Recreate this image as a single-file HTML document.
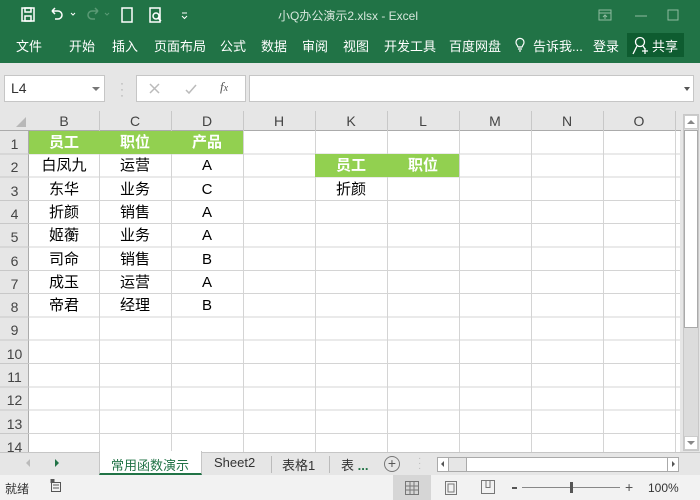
<!DOCTYPE html>
<html><head><meta charset="utf-8">
<style>
*{margin:0;padding:0;box-sizing:border-box}
body{width:700px;height:500px;overflow:hidden;position:relative;background:#e6e6e6;font-family:"Liberation Sans","Noto Sans CJK SC",sans-serif;}
.a{position:absolute}
.title{left:0;top:0;width:700px;height:63px;background:#217346;color:#fff}
.tab{position:absolute;top:36px;font-size:13px;color:#fff}
.cell{position:absolute;width:72px;height:23.3px;line-height:23.3px;text-align:center;font-size:15px;color:#000}
.g{background:#92d050;color:#fff;font-weight:bold}
.ch{position:absolute;top:113px;width:72px;text-align:center;font-size:14px;color:#444}
.rh{position:absolute;left:0;width:29px;text-align:center;font-size:14px;color:#444;height:23.3px;line-height:27px}
.st{position:absolute;top:455px;font-size:13px;color:#333;white-space:nowrap}
</style></head><body>
<div class="a title">
 <svg class="a" style="left:18px;top:5px" width="180" height="20" viewBox="0 0 180 20" fill="none" stroke="#fff" stroke-width="1.5">
  <rect x="4" y="3" width="12" height="13"/><rect x="7" y="3" width="6" height="4"/><rect x="7" y="11" width="6" height="5"/>
  <path d="M34 6 h6 a4 4 0 0 1 0 8 h-3 M34 6 l3 -3 M34 6 l3 3"/>
  <path d="M53 8 l2 2 l2 -2" stroke-width="1"/>
  <path d="M80 6 h-6 a4 4 0 0 0 0 8 h3 M80 6 l-3 -3 M80 6 l-3 3" stroke="#5a9a75"/>
  <path d="M87 8 l2 2 l2 -2" stroke="#5a9a75" stroke-width="1"/>
  <rect x="104" y="3" width="10" height="14"/>
  <rect x="132" y="3" width="10" height="14"/><circle cx="138" cy="11" r="3"/><path d="M140 13 l3 3"/>
  <path d="M164 8 h5 M164 11 l2.5 2.5 l2.5 -2.5" stroke-width="1"/>
 </svg>
 <div class="a" style="left:278px;top:7px;font-size:12px;color:#d6e6dc">小Q办公演示2.xlsx - Excel</div>
 <svg class="a" style="left:560px;top:5px" width="140" height="20" fill="none" stroke="#8fbba0" stroke-width="1">
  <rect x="39" y="5" width="12" height="10"/><path d="M39 8 h12 M45 14 v-4 M43 12 l2 -2 l2 2"/>
  <path d="M75 11 h12"/><rect x="108" y="5" width="10" height="10"/><path d="M145 5 l10 10 M155 5 l-10 10"/>
 </svg>
 <div class="tab" style="left:16px">文件</div>
 <div class="tab" style="left:69px">开始</div>
 <div class="tab" style="left:112px">插入</div>
 <div class="tab" style="left:154px">页面布局</div>
 <div class="tab" style="left:220px">公式</div>
 <div class="tab" style="left:261px">数据</div>
 <div class="tab" style="left:302px">审阅</div>
 <div class="tab" style="left:343px">视图</div>
 <div class="tab" style="left:384px">开发工具</div>
 <div class="tab" style="left:449px">百度网盘</div>
 <svg class="a" style="left:514px;top:36px" width="12" height="17" fill="none" stroke="#fff" stroke-width="1.2"><path d="M3 9 a4 4 0 1 1 6 0 l-1 2 h-4 z M4 13 h4 M5 15 h2"/></svg>
 <div class="tab" style="left:533px">告诉我...</div>
 <div class="tab" style="left:593px">登录</div>
 <div class="a" style="left:627px;top:33px;width:57px;height:24px;background:#0e5c30"></div>
 <svg class="a" style="left:632px;top:36px" width="18" height="19" fill="none" stroke="#fff" stroke-width="1.3"><circle cx="8" cy="6" r="4.5"/><path d="M1 18 l4 -8 M11 10 l2 3 M13 12 v6 M10 15 h6"/></svg>
 <div class="tab" style="left:652px">共享</div>
</div>
<!-- formula bar -->
<div class="a" style="left:4px;top:75px;width:101px;height:27px;background:#fff;border:1px solid #c6c6c6"></div>
<div class="a" style="left:11px;top:80px;font-size:14px;color:#333">L4</div>
<div class="a" style="left:92px;top:87px;border-left:4px solid transparent;border-right:4px solid transparent;border-top:4px solid #777"></div>
<div class="a" style="left:120px;top:80px;color:#aaa;font-size:12px;line-height:6px">·<br>·<br>·</div>
<div class="a" style="left:136px;top:75px;width:110px;height:27px;background:#fff;border:1px solid #c6c6c6"></div>
<svg class="a" style="left:145px;top:80px" width="95" height="18" fill="none" stroke-width="1.5"><path d="M5 4 l9 9 M14 4 l-9 9" stroke="#bbb"/><path d="M41 10 l3 3 l7 -8" stroke="#bbb"/></svg>
<div class="a" style="left:220px;top:79px;font-family:'Liberation Serif',serif;font-style:italic;font-size:13px;color:#555">f<span style="font-size:10px">x</span></div>
<div class="a" style="left:249px;top:75px;width:445px;height:27px;background:#fff;border:1px solid #c6c6c6"></div>
<div class="a" style="left:684px;top:87px;border-left:3px solid transparent;border-right:3px solid transparent;border-top:4px solid #555"></div>
<!-- grid -->
<div class="a" style="left:29px;top:131px;width:651px;height:321px;background-color:#fff;
background-image:repeating-linear-gradient(to bottom,transparent 0,transparent 22.3px,#d4d4d4 22.3px,#d4d4d4 23.3px),repeating-linear-gradient(to right,transparent 0,transparent 70px,#d4d4d4 70px,#d4d4d4 71px,transparent 71px,transparent 72px);
"></div>
<!-- headers -->
<div class="a" style="left:0;top:111px;width:681px;height:20px;background:#e6e6e6;border-bottom:1px solid #ababab"></div>
<div class="a" style="left:0;top:131px;width:29px;height:321px;background:#e6e6e6;border-right:1px solid #ababab"></div>
<div class="a" style="left:0;top:111px;width:681px;height:20px;background-image:repeating-linear-gradient(to right,transparent 0,transparent 71px,#c8c8c8 71px,#c8c8c8 72px);background-position:28px 0"></div>
<div class="a" style="left:16px;top:117px;width:0;height:0;border-left:10px solid transparent;border-bottom:10px solid #b8b8b8"></div>
<div class="ch" style="left:29px;width:70px">B</div><div class="ch" style="left:99px">C</div><div class="ch" style="left:171px">D</div><div class="ch" style="left:243px">H</div><div class="ch" style="left:315px">K</div><div class="ch" style="left:387px">L</div><div class="ch" style="left:459px">M</div><div class="ch" style="left:531px">N</div><div class="ch" style="left:603px">O</div>
<div class="a" style="left:0;top:131px;width:29px;height:321px;background-image:repeating-linear-gradient(to bottom,transparent 0,transparent 22.3px,#c8c8c8 22.3px,#c8c8c8 23.3px)"></div>
<div class="rh" style="top:131px">1</div><div class="rh" style="top:154.3px">2</div><div class="rh" style="top:177.6px">3</div><div class="rh" style="top:200.9px">4</div><div class="rh" style="top:224.2px">5</div><div class="rh" style="top:247.5px">6</div><div class="rh" style="top:270.8px">7</div><div class="rh" style="top:294.1px">8</div><div class="rh" style="top:317.4px">9</div><div class="rh" style="top:340.7px">10</div><div class="rh" style="top:364px">11</div><div class="rh" style="top:387.3px">12</div><div class="rh" style="top:410.6px">13</div><div class="rh" style="top:433.9px">14</div>
<!-- cells -->
<div class="cell g" style="left:29px;top:131px;width:214px;height:23px"></div>
<div class="cell g" style="left:29px;top:131px;width:70px;background:none">员工</div>
<div class="cell g" style="left:99px;top:131px;background:none">职位</div>
<div class="cell g" style="left:171px;top:131px;background:none">产品</div>
<div class="cell g" style="left:315px;top:154.3px;width:144px;height:23px"></div>
<div class="cell g" style="left:315px;top:154.3px;background:none">员工</div>
<div class="cell g" style="left:387px;top:154.3px;background:none">职位</div>
<div class="cell" style="left:29px;width:70px;top:154.3px">白凤九</div><div class="cell" style="left:99px;top:154.3px">运营</div><div class="cell" style="left:171px;top:154.3px">A</div>
<div class="cell" style="left:29px;width:70px;top:177.6px">东华</div><div class="cell" style="left:99px;top:177.6px">业务</div><div class="cell" style="left:171px;top:177.6px">C</div>
<div class="cell" style="left:29px;width:70px;top:200.9px">折颜</div><div class="cell" style="left:99px;top:200.9px">销售</div><div class="cell" style="left:171px;top:200.9px">A</div>
<div class="cell" style="left:29px;width:70px;top:224.2px">姬蘅</div><div class="cell" style="left:99px;top:224.2px">业务</div><div class="cell" style="left:171px;top:224.2px">A</div>
<div class="cell" style="left:29px;width:70px;top:247.5px">司命</div><div class="cell" style="left:99px;top:247.5px">销售</div><div class="cell" style="left:171px;top:247.5px">B</div>
<div class="cell" style="left:29px;width:70px;top:270.8px">成玉</div><div class="cell" style="left:99px;top:270.8px">运营</div><div class="cell" style="left:171px;top:270.8px">A</div>
<div class="cell" style="left:29px;width:70px;top:294.1px">帝君</div><div class="cell" style="left:99px;top:294.1px">经理</div><div class="cell" style="left:171px;top:294.1px">B</div>
<div class="cell" style="left:315px;top:177.6px">折颜</div>
<!-- vscroll -->
<div class="a" style="left:683px;top:114px;width:16px;height:337px;background:#dcdcdc;border:1px solid #c8c8c8"></div>
<div class="a" style="left:684px;top:115px;width:14px;height:14px;background:#fff;border:1px solid #ccc"></div>
<div class="a" style="left:687px;top:120px;border-left:4px solid transparent;border-right:4px solid transparent;border-bottom:4px solid #888"></div>
<div class="a" style="left:684px;top:130px;width:14px;height:198px;background:#fff;border:1px solid #aaa"></div>
<div class="a" style="left:684px;top:436px;width:14px;height:14px;background:#fff;border:1px solid #ccc"></div>
<div class="a" style="left:687px;top:441px;border-left:4px solid transparent;border-right:4px solid transparent;border-top:4px solid #888"></div>
<!-- sheet tabs -->
<div class="a" style="left:0;top:452px;width:700px;height:23px;background:#e6e6e6;border-top:1px solid #c6c6c6"></div>
<div class="a" style="left:26px;top:459px;border-top:4px solid transparent;border-bottom:4px solid transparent;border-right:4px solid #bbb"></div>
<div class="a" style="left:55px;top:459px;border-top:4px solid transparent;border-bottom:4px solid transparent;border-left:4px solid #217346"></div>
<div class="a" style="left:99px;top:451px;width:103px;height:24px;background:#fff;border-bottom:2px solid #217346;border-left:1px solid #c6c6c6;border-right:1px solid #c6c6c6"></div>
<div class="st" style="left:111px;color:#217346">常用函数演示</div>
<div class="st" style="left:214px">Sheet2</div>
<div class="a" style="left:271px;top:456px;width:1px;height:17px;background:#bbb"></div>
<div class="st" style="left:282px">表格1</div>
<div class="a" style="left:329px;top:456px;width:1px;height:17px;background:#bbb"></div>
<div class="st" style="left:341px">表 <b style="color:#217346">...</b></div>
<div class="a" style="left:384px;top:456px;width:16px;height:16px;border:1px solid #777;border-radius:50%;text-align:center;line-height:13px;font-size:14px;color:#555">+</div>
<div class="a" style="left:418px;top:456px;color:#bbb;font-size:10px;line-height:5px">·<br>·<br>·</div>
<div class="a" style="left:437px;top:457px;width:242px;height:15px;background:#fff;border:1px solid #aaa"></div>
<div class="a" style="left:437px;top:457px;width:30px;height:15px;border:1px solid #aaa;background:#e6e6e6"></div>
<div class="a" style="left:437px;top:457px;width:12px;height:15px;border:1px solid #aaa;background:#fff"></div>
<div class="a" style="left:441px;top:461px;border-top:3px solid transparent;border-bottom:3px solid transparent;border-right:3px solid #555"></div>
<div class="a" style="left:667px;top:457px;width:12px;height:15px;border:1px solid #aaa;background:#fff"></div>
<div class="a" style="left:672px;top:461px;border-top:3px solid transparent;border-bottom:3px solid transparent;border-left:3px solid #555"></div>
<!-- status -->
<div class="a" style="left:0;top:475px;width:700px;height:25px;background:#f2f2f2"></div>
<div class="a" style="left:5px;top:480px;font-size:12px;color:#333">就绪</div>
<svg class="a" style="left:50px;top:479px" width="12" height="14" fill="none" stroke="#555"><rect x="1.5" y="3.5" width="9" height="9"/><path d="M3 6h6M3 9h6"/><rect x="1" y="0.5" width="3" height="3" fill="#555"/></svg>
<div class="a" style="left:393px;top:475px;width:38px;height:25px;background:#d6d6d6"></div>
<svg class="a" style="left:405px;top:481px" width="14" height="14" fill="none" stroke="#777"><path d="M0.5 0.5h13v13h-13z M5 0v14 M9 0v14 M0 5h14 M0 9h14"/></svg>
<svg class="a" style="left:444px;top:481px" width="14" height="14" fill="none" stroke="#777"><rect x="1.5" y="0.5" width="11" height="13"/><rect x="4" y="3" width="6" height="8"/></svg>
<svg class="a" style="left:481px;top:480px" width="14" height="14" fill="none" stroke="#777"><path d="M0.5 0.5h13v13h-13z M5 0.5v7h4v-7"/></svg>
<div class="a" style="left:512px;top:487px;width:5px;height:2px;background:#555"></div>
<div class="a" style="left:522px;top:487px;width:98px;height:1px;background:#888"></div>
<div class="a" style="left:570px;top:482px;width:3px;height:11px;background:#555"></div>
<div class="a" style="left:625px;top:479px;font-size:14px;color:#555">+</div>
<div class="a" style="left:648px;top:481px;font-size:12px;color:#333">100%</div>
</body></html>
